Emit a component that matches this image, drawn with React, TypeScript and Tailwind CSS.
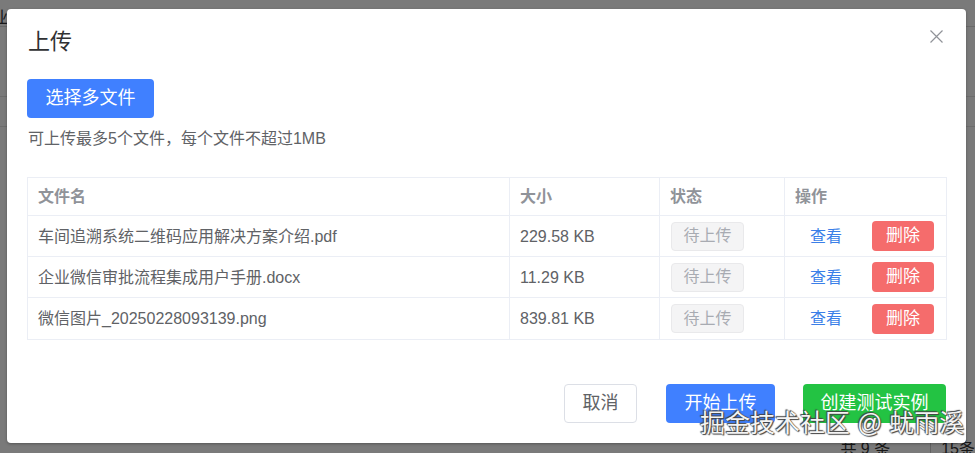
import React from "react";

const font = "font-['Liberation_Sans','Noto_Sans_CJK_SC',sans-serif]";

const rows = [
  { name: "车间追溯系统二维码应用解决方案介绍.pdf", size: "229.58 KB" },
  { name: "企业微信审批流程集成用户手册.docx", size: "11.29 KB" },
  { name: "微信图片_20250228093139.png", size: "839.81 KB" },
];

export default function App() {
  return (
    <div className={`relative h-[453px] w-[975px] overflow-hidden bg-white ${font}`}>
      {/* underlying page */}
      <div className="flex flex-col">
        <div className="h-[27px] border-b border-[#dcdcdc] pl-0 pt-[10px] text-[16px] leading-[16px] text-[#333] -ml-[8px]">
          业
        </div>
        <div className="h-[70px] border-b border-[#e4e4e4]" />
        <div className="h-[30px] border-b border-[#e4e4e4]" />
      </div>
      <div className="absolute bottom-[-8px] right-0 flex items-center gap-[40px] text-[16px] text-[#333]">
        <span>共 9 条</span>
        <span className="border-l border-[#ccc] pl-[10px]">15条</span>
      </div>

      {/* overlay */}
      <div className="absolute inset-0 bg-black/[0.52]">
        <div className="ml-[7px] mt-[9px] flex h-[434px] w-[959px] flex-col rounded-[4px] bg-white px-[20px] pb-[20px] pt-[20px] shadow-[0_1px_3px_rgba(0,0,0,0.3)]">
          <div className="flex items-start justify-between">
            <div className="pl-px text-[22px] leading-[26px] text-[#303133]">上传</div>
            <svg width="13" height="13" viewBox="0 0 13 13" className="mr-[3px] mt-[1px]">
              <path d="M0.5 0.5 L12.5 12.5 M12.5 0.5 L0.5 12.5" stroke="#909399" strokeWidth="1.2" />
            </svg>
          </div>

          <div className="mt-[24px]">
            <button className="h-[39px] w-[127px] rounded-[4px] bg-[#4080ff] text-[18px] text-white">
              选择多文件
            </button>
          </div>

          <div className="mt-[11px] pl-px text-[16px] leading-[20px] text-[#606266]">
            可上传最多5个文件，每个文件不超过1MB
          </div>

          <div className="mt-[28px] w-[920px] border border-[#ebeef5] text-[16px]">
            <div className="flex h-[38px] items-center border-b border-[#ebeef5] font-bold text-[#909399]">
              <div className="w-[482px] border-r border-[#ebeef5] pl-[10px] leading-[37px]">文件名</div>
              <div className="w-[150px] border-r border-[#ebeef5] pl-[10px] leading-[37px]">大小</div>
              <div className="w-[125px] border-r border-[#ebeef5] pl-[10px] leading-[37px]">状态</div>
              <div className="flex-1 pl-[10px] leading-[37px]">操作</div>
            </div>
            {rows.map((r, i) => (
              <div
                key={i}
                className={`flex h-[41px] items-stretch text-[#606266] ${i < rows.length - 1 ? "border-b border-[#ebeef5]" : ""}`}
              >
                <div className="flex w-[482px] items-center border-r border-[#ebeef5] pl-[10px] pt-px">{r.name}</div>
                <div className="flex w-[150px] items-center border-r border-[#ebeef5] pl-[10px] pt-px">{r.size}</div>
                <div className="flex w-[125px] items-center border-r border-[#ebeef5] pl-[11px]">
                  <span className="flex h-[29px] w-[73px] items-center justify-center rounded-[4px] border border-[#e9e9eb] bg-[#f4f4f5] text-[#a8abb2]">
                    待上传
                  </span>
                </div>
                <div className="flex flex-1 items-center pl-[25px]">
                  <span className="pt-px text-[#3b7fe8]">查看</span>
                  <button className="ml-[30px] flex h-[30px] w-[62px] items-center justify-center rounded-[4px] bg-[#f56c6c] text-[17px] text-white">
                    删除
                  </button>
                </div>
              </div>
            ))}
          </div>

          <div className="mt-auto flex justify-end">
            <button className="h-[39px] w-[73px] rounded-[4px] border border-[#dcdfe6] bg-white text-[18px] text-[#606266]">
              取消
            </button>
            <button className="ml-[29px] h-[39px] w-[109px] rounded-[4px] bg-[#4080ff] text-[18px] text-white">
              开始上传
            </button>
            <button className="ml-[28px] h-[39px] w-[143px] rounded-[4px] bg-[#23c343] text-[18px] text-white">
              创建测试实例
            </button>
          </div>
        </div>
      </div>

      {/* watermark */}
      <div className="absolute left-[700px] top-[407px] text-[25px] leading-[32px] text-[#f4f4f4] [text-shadow:0_0_1px_#333,1px_1px_1px_#444,-1px_-1px_1px_#444]">
        掘金技术社区 @ 蚘雨溪
      </div>
    </div>
  );
}
